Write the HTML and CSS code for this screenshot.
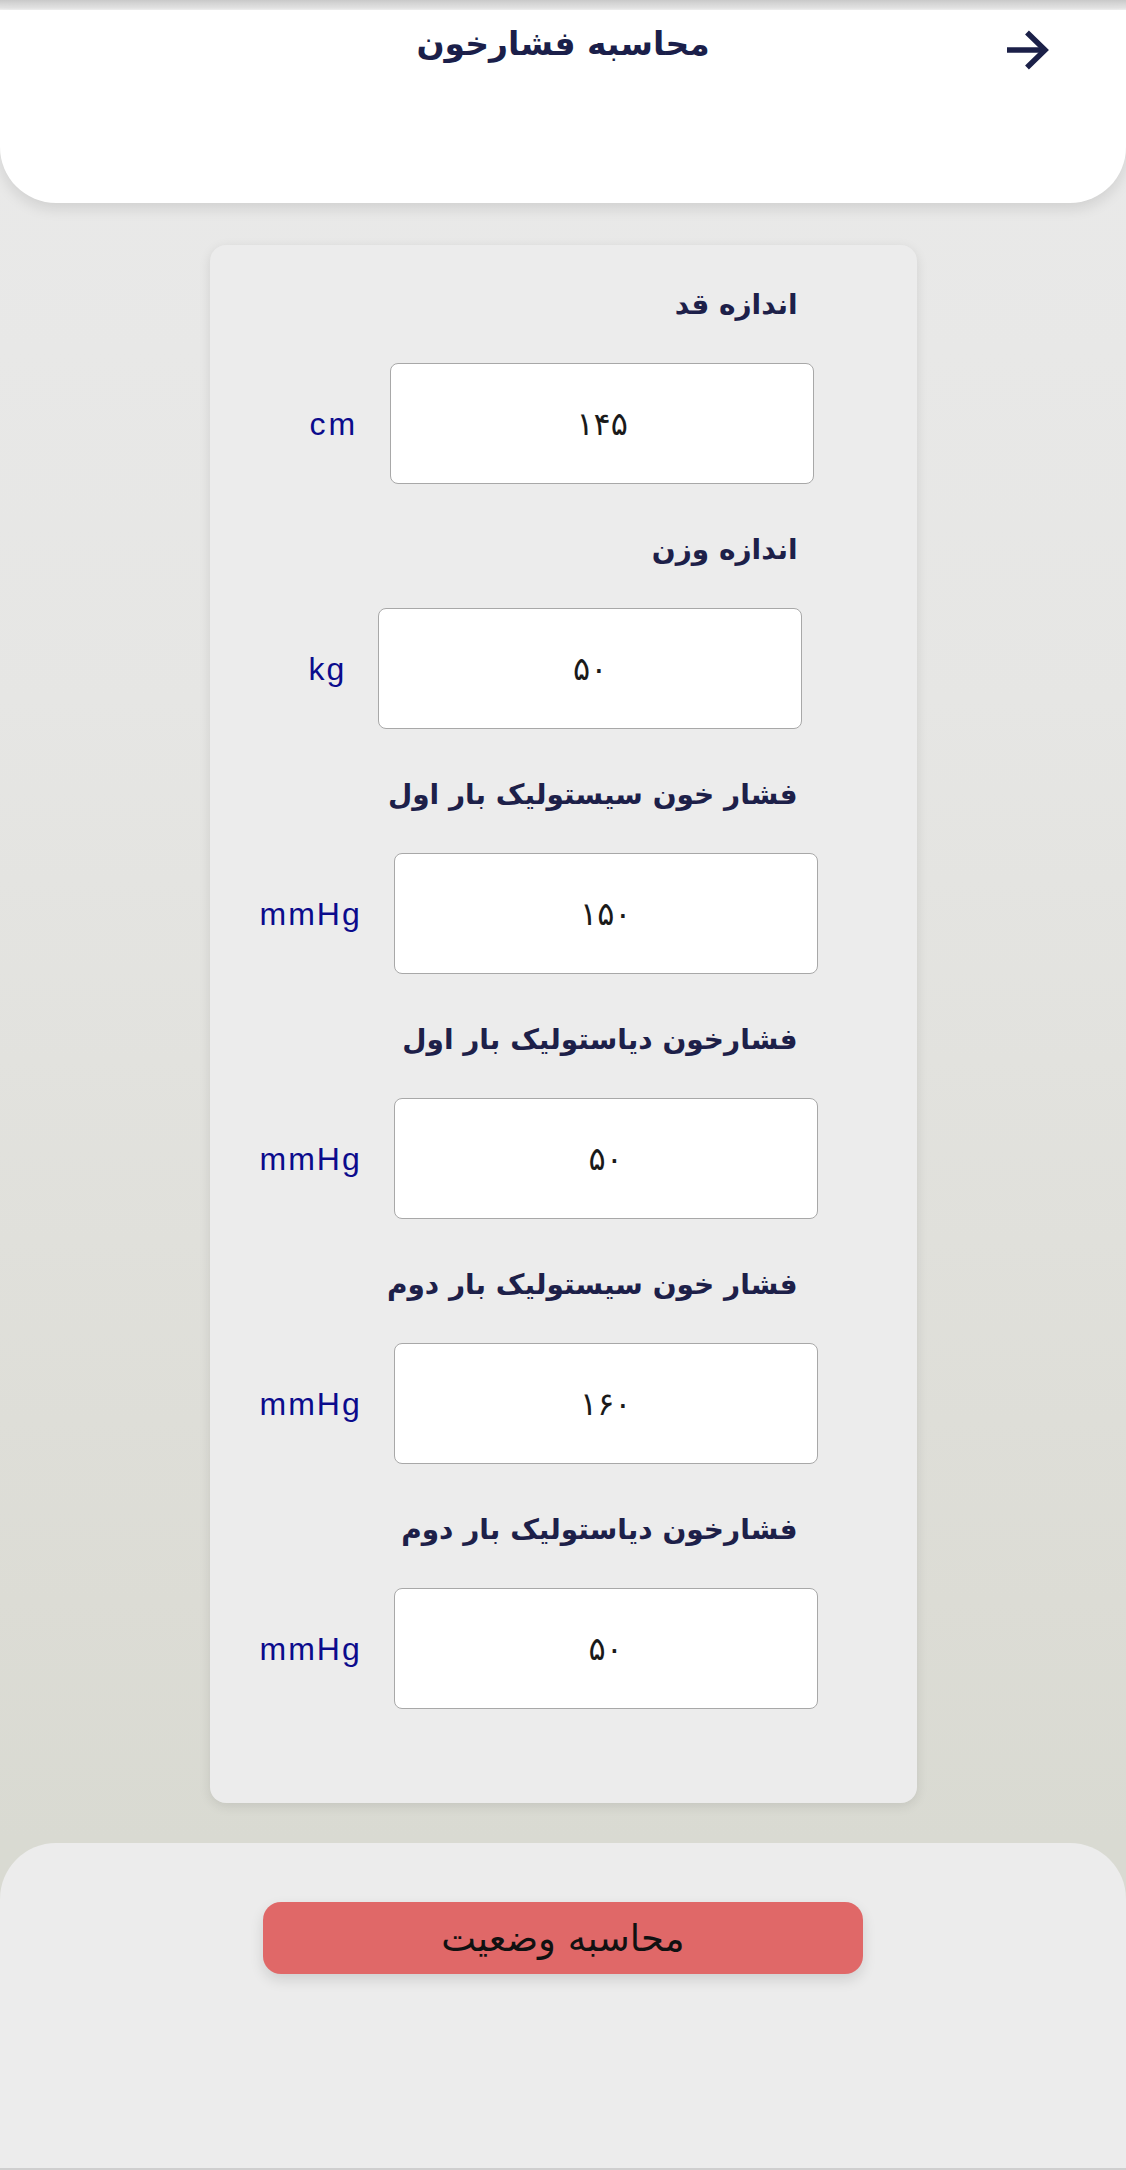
FILE: index.html
```html
<!DOCTYPE html>
<html lang="fa">
<head>
<meta charset="utf-8">
<title>محاسبه فشارخون</title>
<link rel="stylesheet" href="styles.css">
</head>
<body>
<div class="page">
  <div class="topbar"></div>
  <header class="header">
    <h1 class="title">محاسبه فشارخون</h1>
    <span class="back">
      <svg width="44" height="40" viewBox="0 0 44 40" aria-hidden="true">
        <path d="M2 20 H39" stroke="#1b2048" stroke-width="5.5" fill="none"/>
        <path d="M22 2.5 L40 20 L22 37.5" stroke="#1b2048" stroke-width="5.5" fill="none" stroke-linejoin="miter"/>
      </svg>
    </span>
  </header>

  <main class="main">
    <section class="card">
      <div class="field">
        <div class="label">اندازه قد</div>
        <div class="row row-cm">
          <span class="unit">cm</span>
          <div class="box">۱۴۵</div>
        </div>
      </div>
      <div class="field">
        <div class="label">اندازه وزن</div>
        <div class="row row-kg">
          <span class="unit">kg</span>
          <div class="box">۵۰</div>
        </div>
      </div>
      <div class="field">
        <div class="label">فشار خون سیستولیک بار اول</div>
        <div class="row row-mm">
          <span class="unit">mmHg</span>
          <div class="box">۱۵۰</div>
        </div>
      </div>
      <div class="field">
        <div class="label">فشارخون دیاستولیک بار اول</div>
        <div class="row row-mm">
          <span class="unit">mmHg</span>
          <div class="box">۵۰</div>
        </div>
      </div>
      <div class="field">
        <div class="label">فشار خون سیستولیک بار دوم</div>
        <div class="row row-mm">
          <span class="unit">mmHg</span>
          <div class="box">۱۶۰</div>
        </div>
      </div>
      <div class="field">
        <div class="label">فشارخون دیاستولیک بار دوم</div>
        <div class="row row-mm">
          <span class="unit">mmHg</span>
          <div class="box">۵۰</div>
        </div>
      </div>
    </section>
  </main>

  <footer class="bottom">
    <button class="calc">محاسبه وضعیت</button>
  </footer>
  <div class="bottomline"></div>
</div>
</body>
</html>
```

FILE: styles.css
```css
html, body {
  margin: 0;
  padding: 0;
}
body {
  width: 1126px;
  height: 2170px;
  overflow: hidden;
  font-family: "DejaVu Sans", "Noto Sans", sans-serif;
  background: linear-gradient(to bottom, #eaeaea 0px, #e6e6e4 700px, #dcdcd5 1600px, #d9dad2 1840px);
}
.page {
  display: flex;
  flex-direction: column;
  height: 2170px;
}
.topbar {
  height: 10px;
  background: linear-gradient(to bottom, #c9c9c9, #e4e4e4 80%, #f3f3f3);
  flex: none;
}
.header {
  position: relative;
  flex: none;
  height: 193px;
  background: #ffffff;
  border-radius: 0 0 56px 56px;
  box-shadow: 0 6px 14px rgba(0, 0, 0, 0.10);
  display: flex;
  justify-content: center;
  align-items: flex-start;
}
.title {
  margin: 7px 0 0 0;
  font-size: 33px;
  font-weight: bold;
  color: #1b1f4a;
  direction: rtl;
  line-height: 54px;
}
.back {
  position: absolute;
  left: 1005px;
  top: 20px;
  width: 44px;
  height: 40px;
  display: block;
}
.main {
  flex: none;
  padding-top: 42px;
  display: flex;
  justify-content: center;
}
.card {
  width: 707px;
  box-sizing: border-box;
  background: #ececec;
  border-radius: 16px;
  box-shadow: 0 3px 12px rgba(0, 0, 0, 0.10);
  padding: 35px 0 94px 0;
  display: flex;
  flex-direction: column;
  gap: 41px;
}
.field {
  display: flex;
  flex-direction: column;
  gap: 33px;
}
.label {
  height: 50px;
  line-height: 50px;
  direction: rtl;
  text-align: right;
  padding-right: 119px;
  font-size: 28px;
  font-weight: bold;
  color: #1d2049;
  white-space: nowrap;
}
.row {
  display: flex;
  align-items: center;
  gap: 32px;
}
.row-cm { padding-left: 100px; }
.row-kg { padding-left: 99px; }
.row-mm { padding-left: 50px; }
.unit {
  font-family: "Liberation Sans", Arial, sans-serif;
  font-size: 32px;
  letter-spacing: 2px;
  color: #0b0b8c;
  line-height: 40px;
}
.row-cm .unit { letter-spacing: 3px; }
.box {
  width: 424px;
  height: 121px;
  box-sizing: border-box;
  background: #ffffff;
  border: 1.5px solid #a8a8a8;
  border-radius: 8px;
  display: flex;
  align-items: center;
  justify-content: center;
  font-size: 32px;
  color: #1a1a1a;
  direction: rtl;
}
.bottom {
  margin-top: 40px;
  flex: 1;
  background: #ececec;
  border-radius: 56px 56px 0 0;
  display: flex;
  justify-content: center;
  align-items: flex-start;
  padding-top: 59px;
}
.calc {
  width: 600px;
  height: 72px;
  border: none;
  border-radius: 18px;
  background: #e06868;
  box-shadow: 0 6px 14px rgba(0, 0, 0, 0.12);
  font-family: "DejaVu Sans", sans-serif;
  font-size: 37px;
  color: #111111;
  direction: rtl;
  padding: 0;
}
.bottomline {
  flex: none;
  height: 2px;
  background: #cfcfcf;
}
```
